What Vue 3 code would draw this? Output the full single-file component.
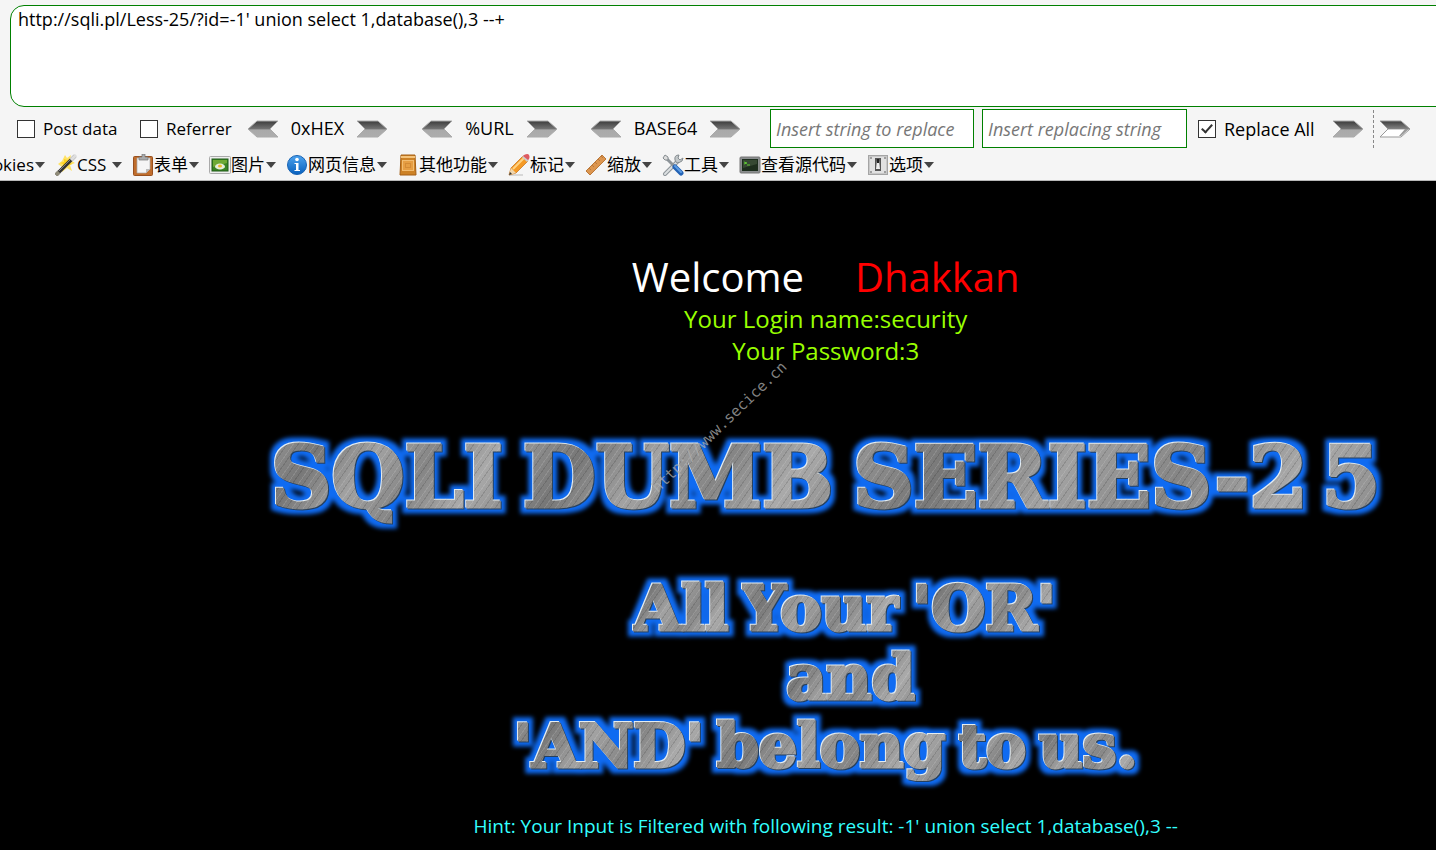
<script setup>
import { ref } from 'vue'

const url = ref("http://sqli.pl/Less-25/?id=-1' union select 1,database(),3 --+")
const postData = ref(false)
const referrer = ref(false)
const replaceAll = ref(true)

const encoders = [
  { name: '0xHEX', cls: 'hex' },
  { name: '%URL', cls: 'pct' },
  { name: 'BASE64', cls: 'b64' },
]

const menus = [
  { label: 'CSS', icon: 'wand' },
  { label: '表单', icon: 'clipboard' },
  { label: '图片', icon: 'picture' },
  { label: '网页信息', icon: 'info' },
  { label: '其他功能', icon: 'book' },
  { label: '标记', icon: 'pencil' },
  { label: '缩放', icon: 'ruler' },
  { label: '工具', icon: 'tools' },
  { label: '查看源代码', icon: 'screen' },
  { label: '选项', icon: 'switch' },
]
</script>

<template>
  <div class="page">
    <svg class="defs" width="0" height="0" aria-hidden="true">
      <defs>
        <linearGradient id="steel" x1="0" y1="0" x2="0" y2="1">
          <stop offset="0" stop-color="#3c3c3c" />
          <stop offset=".5" stop-color="#747474" />
          <stop offset=".55" stop-color="#a9a9a9" />
          <stop offset="1" stop-color="#adadad" />
        </linearGradient>
        <linearGradient id="steelOpen" x1="0" y1="0" x2="0" y2="1">
          <stop offset="0" stop-color="#3c3c3c" />
          <stop offset=".5" stop-color="#858585" />
          <stop offset=".55" stop-color="#fff" />
          <stop offset="1" stop-color="#fff" />
        </linearGradient>
        <linearGradient id="blue" x1="0" y1="0" x2="0" y2="1">
          <stop offset="0" stop-color="#4da3ee" />
          <stop offset="1" stop-color="#0860bd" />
        </linearGradient>
        <filter id="glow" x="-5%" y="-20%" width="110%" height="140%" color-interpolation-filters="sRGB">
          <feMorphology in="SourceAlpha" operator="dilate" radius="5" result="fat" />
          <feGaussianBlur in="fat" stdDeviation="2" result="soft" />
          <feFlood flood-color="#0f6bf2" />
          <feComposite in2="soft" operator="in" result="halo" />
          <feOffset in="SourceAlpha" dx="-1" dy="-1" result="up" />
          <feFlood flood-color="#e4edf2" />
          <feComposite in2="up" operator="in" result="light" />
          <feOffset in="SourceAlpha" dx="1" dy="1" result="down" />
          <feFlood flood-color="#26405e" />
          <feComposite in2="down" operator="in" result="dark" />
          <feMerge>
            <feMergeNode in="halo" />
            <feMergeNode in="dark" />
            <feMergeNode in="light" />
            <feMergeNode in="SourceGraphic" />
          </feMerge>
        </filter>
      </defs>
    </svg>

    <header class="hackbar">
      <textarea v-model="url" class="url" aria-label="URL" spellcheck="false"></textarea>

      <div class="controls">
        <label class="check post"><input v-model="postData" type="checkbox" /><span>Post data</span></label>
        <label class="check ref"><input v-model="referrer" type="checkbox" /><span>Referrer</span></label>

        <div v-for="e in encoders" :key="e.name" class="encoder" :class="e.cls">
          <button class="arrow" :aria-label="'Decode ' + e.name">
            <svg width="32" height="18" viewBox="0 0 32 18"><path d="M31 1H10L1 9l9 8h21l-8-8z" fill="url(#steel)" stroke="#aaa" /></svg>
          </button>
          <span class="name">{{ e.name }}</span>
          <button class="arrow" :aria-label="'Encode ' + e.name">
            <svg width="32" height="18" viewBox="0 0 32 18"><path d="M1 1h21l9 8-9 8H1l8-8z" fill="url(#steel)" stroke="#aaa" /></svg>
          </button>
        </div>

        <input class="field" type="text" placeholder="Insert string to replace" aria-label="String to replace" />
        <input class="field" type="text" placeholder="Insert replacing string" aria-label="Replacing string" />
        <label class="check all"><input v-model="replaceAll" type="checkbox" /><span>Replace All</span></label>
        <button class="arrow" aria-label="Replace">
          <svg width="32" height="18" viewBox="0 0 32 18"><path d="M1 1h21l9 8-9 8H1l8-8z" fill="url(#steel)" stroke="#aaa" /></svg>
        </button>
        <div class="divider"></div>
        <button class="arrow" aria-label="Next">
          <svg width="32" height="18" viewBox="0 0 32 18">
            <path d="M1 1h21l9 8-9 8H1l8-8z" fill="url(#steelOpen)" stroke="#999" />
            <path d="M22 16l8-7h-4l-6 7z" fill="#999" />
          </svg>
        </button>
      </div>

      <nav class="menus">
        <button class="menu cookies"><span>Cookies</span><i class="caret"></i></button>
        <button v-for="m in menus" :key="m.label" class="menu">
          <svg class="icon" width="22" height="22" viewBox="0 0 22 22" aria-hidden="true">
            <g v-if="m.icon === 'wand'">
              <path d="M10 1l2 3 4-3-1 5 5 3-5 2 2 6-5-3-5 4 0-5-4-3 4-3z" fill="#ffe265" />
              <path d="M9 5l3 1 3-1-1 3 3 2-5 2-4 2 0-4-3-1 4-1z" fill="#ffd21f" />
              <path d="M1 21L20 2" stroke="#333" stroke-width="3.500" />
              <path d="M1 21L4 18" stroke="#8f8b78" stroke-width="4" />
              <path d="M16 6l5-5" stroke="#dedede" stroke-width="3.500" />
              <path d="M4 17L16 5" stroke="#9a9a9a" stroke-width=".8" />
            </g>
            <g v-else-if="m.icon === 'clipboard'">
              <rect x="1.500" y="2.500" width="19" height="19" rx="1" fill="#c06d2c" stroke="#98501f" />
              <path d="M5 4h13v11l-4 4H5z" fill="#f5f5f5" stroke="#aaa" stroke-width=".7" />
              <path d="M18 15h-4v4z" fill="#bbb" />
              <path d="M7 6V3h3V0h3v3h3v3z" fill="#a8aaab" stroke="#777" stroke-width=".7" />
            </g>
            <g v-else-if="m.icon === 'picture'">
              <rect x=".5" y="2.500" width="21" height="17" rx="1" fill="#eee" stroke="#aaa" />
              <rect x="3" y="5" width="16" height="12" fill="#398323" stroke="#1e5a17" />
              <path d="M4 6h14v3L4 13z" fill="#85b93c" opacity=".7" />
              <ellipse cx="11" cy="12.500" rx="5" ry="3" fill="#e6edda" />
              <ellipse cx="11" cy="12" rx="2" ry="1.500" fill="#f0bb2a" />
            </g>
            <g v-else-if="m.icon === 'info'">
              <circle cx="11" cy="11" r="9.500" fill="url(#blue)" stroke="#1863b4" />
              <circle cx="11" cy="5.500" r="1.800" fill="#fff" />
              <path d="M8.500 9h4v7h1.500v1H8.500v-1H10v-6H8.500z" fill="#fff" />
            </g>
            <g v-else-if="m.icon === 'book'">
              <path d="M4 1h14l1 20H3z" fill="#cd8226" stroke="#a45e14" />
              <path d="M4 3h14" stroke="#f5c37a" stroke-width="2" />
              <rect x="5.500" y="6.500" width="11" height="10" fill="#e69e43" stroke="#f2bd72" />
              <rect x="8.500" y="9.500" width="5" height="4" fill="none" stroke="#d48b35" />
            </g>
            <g v-else-if="m.icon === 'pencil'">
              <path d="M1 21h14" stroke="#bbb" stroke-width="2" opacity=".5" />
              <path d="M1 21l2-7L15 2l5 5L8 19z" fill="#f59a25" stroke="#c66f13" stroke-width=".7" />
              <path d="M5 15L16 4" stroke="#ffd282" stroke-width="2" />
              <path d="M1 21l2-7 5 5z" fill="#efd6ae" />
              <path d="M1 21l1-3 2 2z" fill="#333" />
              <path d="M14 3l2-2 5 5-2 2z" fill="#ccc" />
              <path d="M16 1q4-2 5 0t0 4l-1 1-5-4z" fill="#de5a61" />
            </g>
            <g v-else-if="m.icon === 'ruler'">
              <path d="M1 17L17 1l4 4L5 21z" fill="#dc9650" stroke="#bb7838" />
              <path d="M4 14l2 2M7 11l2 2M10 8l2 2M13 5l2 2M16 2l2 2" stroke="#b0703a" stroke-width=".8" />
            </g>
            <g v-else-if="m.icon === 'tools'" fill="none">
              <path d="M3 20L16 7" stroke="#8d9499" stroke-width="4" stroke-linecap="round" />
              <path d="M3 20L16 7" stroke="#dce0e2" stroke-width="2" stroke-linecap="round" />
              <path d="M21 4l-3 2-2-2 1-3q-5 0-4 5t7 1z" fill="#c3c8ca" stroke="#858c90" />
              <path d="M4 4l8 8" stroke="#8d9499" stroke-width="3" />
              <path d="M1 4l2-3 3 2v3H3z" fill="#ddd" stroke="#858c90" />
              <path d="M13 13l6 6" stroke="#2463b5" stroke-width="5" stroke-linecap="round" />
              <path d="M13 12l6 6" stroke="#5d9ce3" stroke-width="2" stroke-linecap="round" />
            </g>
            <g v-else-if="m.icon === 'screen'">
              <rect x="1" y="3" width="20" height="16" rx="1" fill="#8a8d8e" stroke="#777" />
              <rect x="3" y="5" width="16" height="12" fill="#1d2d1d" />
              <path d="M4 6h14v4L4 14z" fill="#41543d" opacity=".7" />
              <path d="M5 8l3 1-3 1M8 11h3" fill="none" stroke="#5ec634" />
            </g>
            <g v-else>
              <rect x="1.500" y="1.500" width="19" height="19" fill="#c9c9c9" stroke="#a5a5a5" />
              <rect x="3" y="3" width="16" height="16" fill="#e1e1e1" />
              <path d="M8 4h6v13H8z" fill="#555" />
              <path d="M10 6h2l1 9H9z" fill="#eee" />
              <path d="M10 5h2v4h-2z" fill="#222" />
              <circle cx="4" cy="4" r="1" fill="#888" /><circle cx="18" cy="4" r="1" fill="#888" />
              <circle cx="4" cy="18" r="1" fill="#888" /><circle cx="18" cy="18" r="1" fill="#888" />
            </g>
          </svg>
          <span>{{ m.label }}</span><i class="caret"></i>
        </button>
      </nav>
    </header>

    <main class="site">
      <div class="content">
        <h1 class="welcome"><span>Welcome</span><span class="who">Dhakkan</span></h1>
        <p class="login">Your Login name:security<br />Your Password:3</p>
        <h2 class="metal series"><span>SQLI</span><span>DUMB</span><span>SERIES-2<span class="last">5</span></span></h2>
        <div class="slogan">
          <p class="metal first"><span>All</span><span>Your</span><span>'OR'</span></p>
          <p class="metal second"><span>and</span></p>
          <p class="metal"><span>'AND'</span><span>belong</span><span>to</span><span>us.</span></p>
        </div>
        <p class="hint">Hint: Your Input is Filtered with following result: -1' union select 1,database(),3 --</p>
        <span class="watermark">http://www.secice.cn</span>
      </div>
    </main>
  </div>
</template>

<style>
html, body { background: #000; overflow: hidden; }
</style>

<style scoped>
.page {
  min-height: 100vh;
  overflow: hidden;
  background: #000;
  color: #000;
  font-family: "Open Sans", "Noto Sans CJK SC", sans-serif;
  font-size: 18px;
}
.defs { position: absolute; }
h1, h2, p { margin: 0; font-weight: 400; }
button { padding: 0; border: 0; background: none; color: inherit; font: inherit; }

.hackbar {
  height: 180px;
  background: #f5f5f5;
  border-bottom: 1px solid #b8b8b8;
  overflow: hidden;
}
.url {
  display: block;
  box-sizing: border-box;
  width: 101%;
  height: 102px;
  margin: 5px 0 2px 10px;
  padding: 1px 7px;
  border: 1px solid #008000;
  border-radius: 14px;
  background: #fff;
  color: #000;
  font: inherit;
  line-height: 24px;
  resize: none;
  outline: 0;
}
.controls {
  display: flex;
  align-items: center;
  height: 39px;
  padding-left: 17px;
  white-space: nowrap;
}
.controls > * { flex-shrink: 0; }
.check { display: flex; align-items: center; gap: 8px; }
.check input {
  appearance: none;
  position: relative;
  width: 18px;
  height: 18px;
  margin: 0;
  border: 1px solid #333;
  background: #fff;
}
.check input:checked::after {
  content: "";
  position: absolute;
  left: 5px;
  top: 1px;
  width: 4px;
  height: 9px;
  border: solid #333;
  border-width: 0 2px 2px 0;
  transform: rotate(42deg);
}
.post { width: 123px; font-size: 17px; }
.ref { width: 107px; font-size: 17px; }
.all { width: 134px; margin-left: 11px; }
.encoder { display: flex; align-items: center; justify-content: space-between; }
.encoder .name { line-height: 24px; padding-bottom: 2px; }
.hex { width: 141px; margin-right: 33px; }
.pct { width: 137px; margin-right: 32px; }
.b64 { width: 151px; margin-right: 29px; }
.arrow { display: flex; }
.field {
  box-sizing: border-box;
  width: 204px;
  height: 39px;
  padding: 0 5px;
  border: 1px solid #008000;
  border-radius: 0;
  background: #fff;
  font: inherit;
  outline: 0;
}
.field + .field { width: 205px; margin-left: 8px; }
.field::placeholder { color: #777; font-style: italic; opacity: 1; }
.divider { height: 38px; margin: 0 5px 0 9px; border-left: 1px dashed #888; }

.menus {
  display: flex;
  align-items: center;
  gap: 10px;
  height: 33px;
  font-size: 17px;
  white-space: nowrap;
}
.menu {
  display: flex;
  align-items: center;
  flex-shrink: 0;
  min-width: 67px;
  line-height: 24px;
}
.menu:lang(zh) { font-weight: 300; }
.menu span { margin-right: 1px; }
.menu.cookies { min-width: 0; width: 45px; justify-content: flex-end; overflow: hidden; }
.icon { display: block; }
.caret {
  margin-left: auto;
  border: 5px solid transparent;
  border-top: 6px solid #444;
  border-bottom: 0;
}
.cookies .caret { margin-left: 0; }

.site { overflow: hidden; color: #fff; }
.content {
  position: relative;
  display: flex;
  flex-direction: column;
  align-items: center;
  width: 115vw;
  padding-top: 68px;
}
.welcome { display: flex; gap: 51px; font-size: 40px; line-height: 56px; }
.who { color: #f00; }
.login { color: #9f0; font-size: 24px; line-height: 32px; text-align: center; margin-top: -2px; }
.metal {
  display: flex;
  gap: 13px;
  font-family: "DejaVu Serif", serif;
  font-weight: 700;
  white-space: nowrap;
  filter: url(#glow);
}
.metal > span {
  color: transparent;
  -webkit-text-stroke: 3px transparent;
  background:
    repeating-linear-gradient(125deg, rgba(255,255,255,.12) 0 1px, transparent 1px 4px, rgba(0,0,0,.12) 4px 5px, transparent 5px 9px),
    linear-gradient(125deg, #999, #777 20%, #a2a2a2 40%, #858585 60%, #aaa 80%, #888);
  -webkit-background-clip: text;
  background-clip: text;
}
.last { margin-left: 14px; }
.series { gap: 20px; margin-top: 61px; font-size: 84px; line-height: 100px; }
.slogan { display: flex; flex-direction: column; align-items: center; margin-top: 46px; }
.slogan .metal { font-size: 60px; line-height: 69px; }
.slogan .first { padding-left: 38px; font-size: 62px; }
.slogan .second { padding-left: 50px; font-size: 62px; }
.hint { margin-top: 33px; color: #3ff; font-size: 19px; line-height: 24px; }
.watermark {
  position: absolute;
  left: 629px;
  top: 236px;
  color: rgba(175, 175, 175, .75);
  font: 15px/20px "DejaVu Sans Mono", monospace;
  transform: rotate(-44deg);
}
</style>
